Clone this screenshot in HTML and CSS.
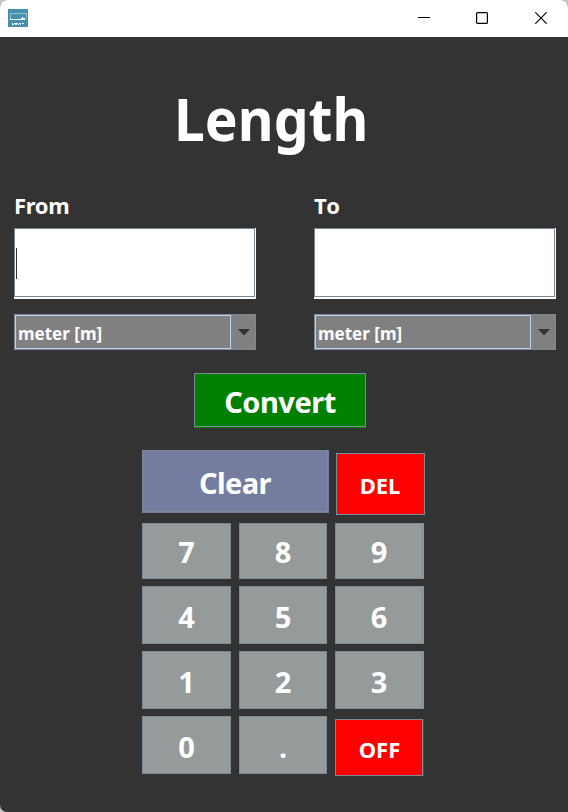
FILE: index.html
```html
<!DOCTYPE html>
<html lang="en">
<head>
<meta charset="utf-8">
<title>Length</title>
<link rel="stylesheet" href="styles.css">
</head>
<body>
<div class="window">
  <header class="titlebar">
    <svg class="app-icon" width="20" height="18" viewBox="0 0 20 18" shape-rendering="crispEdges">
      <rect width="20" height="18" fill="#4690b0"/>
      <path d="M2.5 10V4.500H18.500V10" fill="none" stroke="#93bfd1"/>
      <path d="M2 10.500H17M13 9.500H17M14 8.500H15" fill="none" stroke="#fff"/>
      <path d="M4 14.500H5M6 14.500H10M11 14.500H13M14 14.500H16M4 15.500H6M7 15.500H9M10 15.500H11M12 15.500H13" fill="none" stroke="#e8f3f7"/>
    </svg>
    <div class="controls">
      <svg width="12" height="12" viewBox="0 0 12 12"><path d="M0 5.500H12" stroke="#000"/></svg>
      <svg width="12" height="12" viewBox="0 0 12 12"><rect x=".6" y=".6" width="10.800" height="10.800" rx="1" fill="none" stroke="#000" stroke-width="1.200"/></svg>
      <svg width="12" height="12" viewBox="0 0 12 12"><path d="M.3 .3L11.700 11.700M11.700 .3L.3 11.700" stroke="#000" stroke-width="1.150"/></svg>
    </div>
  </header>
  <main>
    <h1>Length</h1>
    <div class="columns">
      <section class="unit">
        <div class="label">From</div>
        <div class="field"><span class="caret"></span></div>
        <div class="combo"><span class="value">meter [m]</span><span class="drop"><svg width="12" height="6" viewBox="0 0 12 6"><path d="M0 0H12L6.500 6H5.500Z" fill="#333"/></svg></span></div>
      </section>
      <section class="unit">
        <div class="label to">To</div>
        <div class="field"></div>
        <div class="combo"><span class="value">meter [m]</span><span class="drop"><svg width="12" height="6" viewBox="0 0 12 6"><path d="M0 0H12L6.500 6H5.500Z" fill="#333"/></svg></span></div>
      </section>
    </div>
    <button class="btn convert"><span>Convert</span></button>
    <div class="keypad">
      <div class="row top">
        <button class="btn clear"><span>Clear</span></button>
        <button class="btn red del"><span>DEL</span></button>
      </div>
      <div class="row first">
        <button class="btn">7</button><button class="btn">8</button><button class="btn edge">9</button>
      </div>
      <div class="row">
        <button class="btn">4</button><button class="btn">5</button><button class="btn edge">6</button>
      </div>
      <div class="row">
        <button class="btn">1</button><button class="btn">2</button><button class="btn edge">3</button>
      </div>
      <div class="row">
        <button class="btn">0</button><button class="btn">.</button><button class="btn red off edge"><span>OFF</span></button>
      </div>
    </div>
  </main>
</div>
</body>
</html>
```
FILE: styles.css
```css
* { box-sizing: border-box; }
body { margin: 0; background: #c4c4c4; font-family: "Noto Sans", "Open Sans", sans-serif; font-weight: 700; color: #fff; }
.window { width: 568px; height: 812px; background: #333; border-radius: 7px 7px 0 7px; overflow: hidden; }
.titlebar { height: 37px; background: #fff; display: flex; justify-content: space-between; align-items: flex-start; padding: 9px 21px 0 8px; }
.app-icon { display: block; }
.controls { display: flex; gap: 47px; padding-top: 3px; }
.controls svg { display: block; }
.controls svg:first-child { margin-right: -1px; }
main { display: flex; flex-direction: column; align-items: center; }
h1 { margin: 40px 0 0; width: 100%; padding-left: 174px; height: 83px; line-height: 82px; font-size: 59px; font-weight: 700; white-space: nowrap; transform: scaleX(.935); transform-origin: 174px 50%; }
.columns { display: flex; gap: 58px; width: 542px; margin-top: 30px; align-self: flex-start; margin-left: 14px; }
.unit { width: 242px; }
.label { height: 30px; line-height: 30px; font-size: 22px; letter-spacing: -.3px; }
.label.to { letter-spacing: 1.200px; }
.field { height: 71px; margin-top: 8px; background: #fff; padding: 20px 0 0 2px; position: relative; }
.field::before { content: ""; position: absolute; inset: 0 1px 2px 0; border: 1px solid #7a8a99; }
.caret { display: block; width: 1px; height: 31px; background: #333; }
.combo { display: flex; height: 36px; margin-top: 15px; background: #808080; border: 1px solid #7a8a99; }
.value { width: 216px; border: 1px solid #b8cfe5; padding-left: 2px; font-size: 17px; line-height: 35px; }
.drop { flex: 1; display: flex; align-items: center; justify-content: flex-end; padding-right: 5px; }
.btn { position: relative; display: flex; align-items: center; justify-content: center; width: 89px; height: 58px; padding: 4px 0 0; border: 0; background: #959a9a; color: #fff; font: 700 29px/40px "Noto Sans", "Open Sans", sans-serif; }
.btn::before { content: ""; position: absolute; inset: 0; border: 1px solid #7a8a99; }
.btn:nth-child(2) { width: 88px; }
.btn.edge { padding-right: 1px; }
.btn.edge::before { right: 1px; }
.btn.convert { width: 172px; height: 55px; margin: 23px 8px 0 0; background: #008000; padding-top: 3px; letter-spacing: -.5px; }
.btn.convert::before { bottom: 1px; }
.keypad { width: 283px; margin: 22px 0 0 142px; align-self: flex-start; display: flex; flex-direction: column; gap: 7px; }
.row { display: flex; gap: 8px; }
.row.top { gap: 7px; height: 66px; }
.row .clear { width: 187px; height: 63px; background: #747da0; padding: 3px 1px 0 0; letter-spacing: -.6px; }
.clear::before { inset: 0 1px 1px 0; }
.row .red { background: #f00; font-size: 22px; padding-top: 2px; }
.row .del { width: 89px; height: 62px; margin-top: 3px; padding-right: 1px; }
.row .off { height: 57px; margin-top: 3px; padding-right: 0; }
.row.first .btn { height: 56px; padding-top: 2px; }
```
